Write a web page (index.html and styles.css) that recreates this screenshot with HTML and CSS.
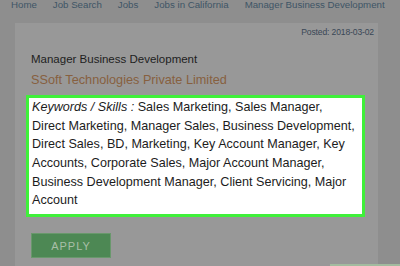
FILE: index.html
```html
<!DOCTYPE html>
<html>
<head>
<meta charset="utf-8">
<link rel="stylesheet" href="styles.css">
</head>
<body>
<nav class="crumbs">
  <span>Home</span>
  <span>Job Search</span>
  <span>Jobs</span>
  <span>Jobs in California</span>
  <span>Manager Business Development</span>
</nav>
<div class="card">
  <div class="posted">Posted: 2018-03-02</div>
  <div class="title">Manager Business Development</div>
  <div class="company">SSoft Technologies Private Limited</div>
  <div class="skills"><em>Keywords / Skills :</em> Sales Marketing, Sales Manager, Direct Marketing, Manager Sales, Business Development, Direct Sales, BD, Marketing, Key Account Manager, Key Accounts, Corporate Sales, Major Account Manager, Business Development Manager, Client Servicing, Major Account</div>
  <div class="apply">APPLY</div>
</div>
<div class="strip"></div>
</body>
</html>
```
FILE: styles.css
```css
html { overflow: hidden; }
body {
  margin: 0;
  background: #8e8e8e;
  font-family: "Liberation Sans", Arial, sans-serif;
  height: 266px;
  position: relative;
  overflow: hidden;
}
.crumbs {
  display: flex;
  gap: 16px;
  padding-left: 11px;
  font-size: 9.7px;
  line-height: 10px;
  color: #3e5566;
  height: 23px;
  white-space: nowrap;
}
.card {
  margin-left: 15px;
  width: 363px;
  box-sizing: border-box;
  background: #989898;
  padding: 4px 13px 60px 11px;
}
.posted {
  text-align: right;
  font-size: 8.6px;
  letter-spacing: -0.15px;
  line-height: 10px;
  color: #384756;
  margin-right: -9px;
}
.title {
  margin: 15px 0 0 5px;
  font-size: 11.5px;
  line-height: 14px;
  color: #1e1e1e;
}
.company {
  margin: 7px 0 0 5px;
  font-size: 12.7px;
  line-height: 15px;
  color: #87603f;
}
.skills {
  margin-top: 7px;
  border: 3px solid #3ff03a;
  background: #fff;
  padding: 0 5px 4px 3px;
  font-size: 12.6px;
  line-height: 18.67px;
  color: #1c1c1c;
}
.apply {
  margin: 16px 0 0 5px;
  width: 80px;
  height: 25px;
  box-sizing: border-box;
  border: 1px solid #69986c;
  background: #4d8854;
  color: #a9bfa8;
  font-size: 11px;
  letter-spacing: 1px;
  display: flex;
  align-items: center;
  justify-content: center;
}
.strip {
  position: absolute;
  left: 330px;
  top: 264px;
  width: 70px;
  height: 2px;
  background: #a2bb9f;
}
```
